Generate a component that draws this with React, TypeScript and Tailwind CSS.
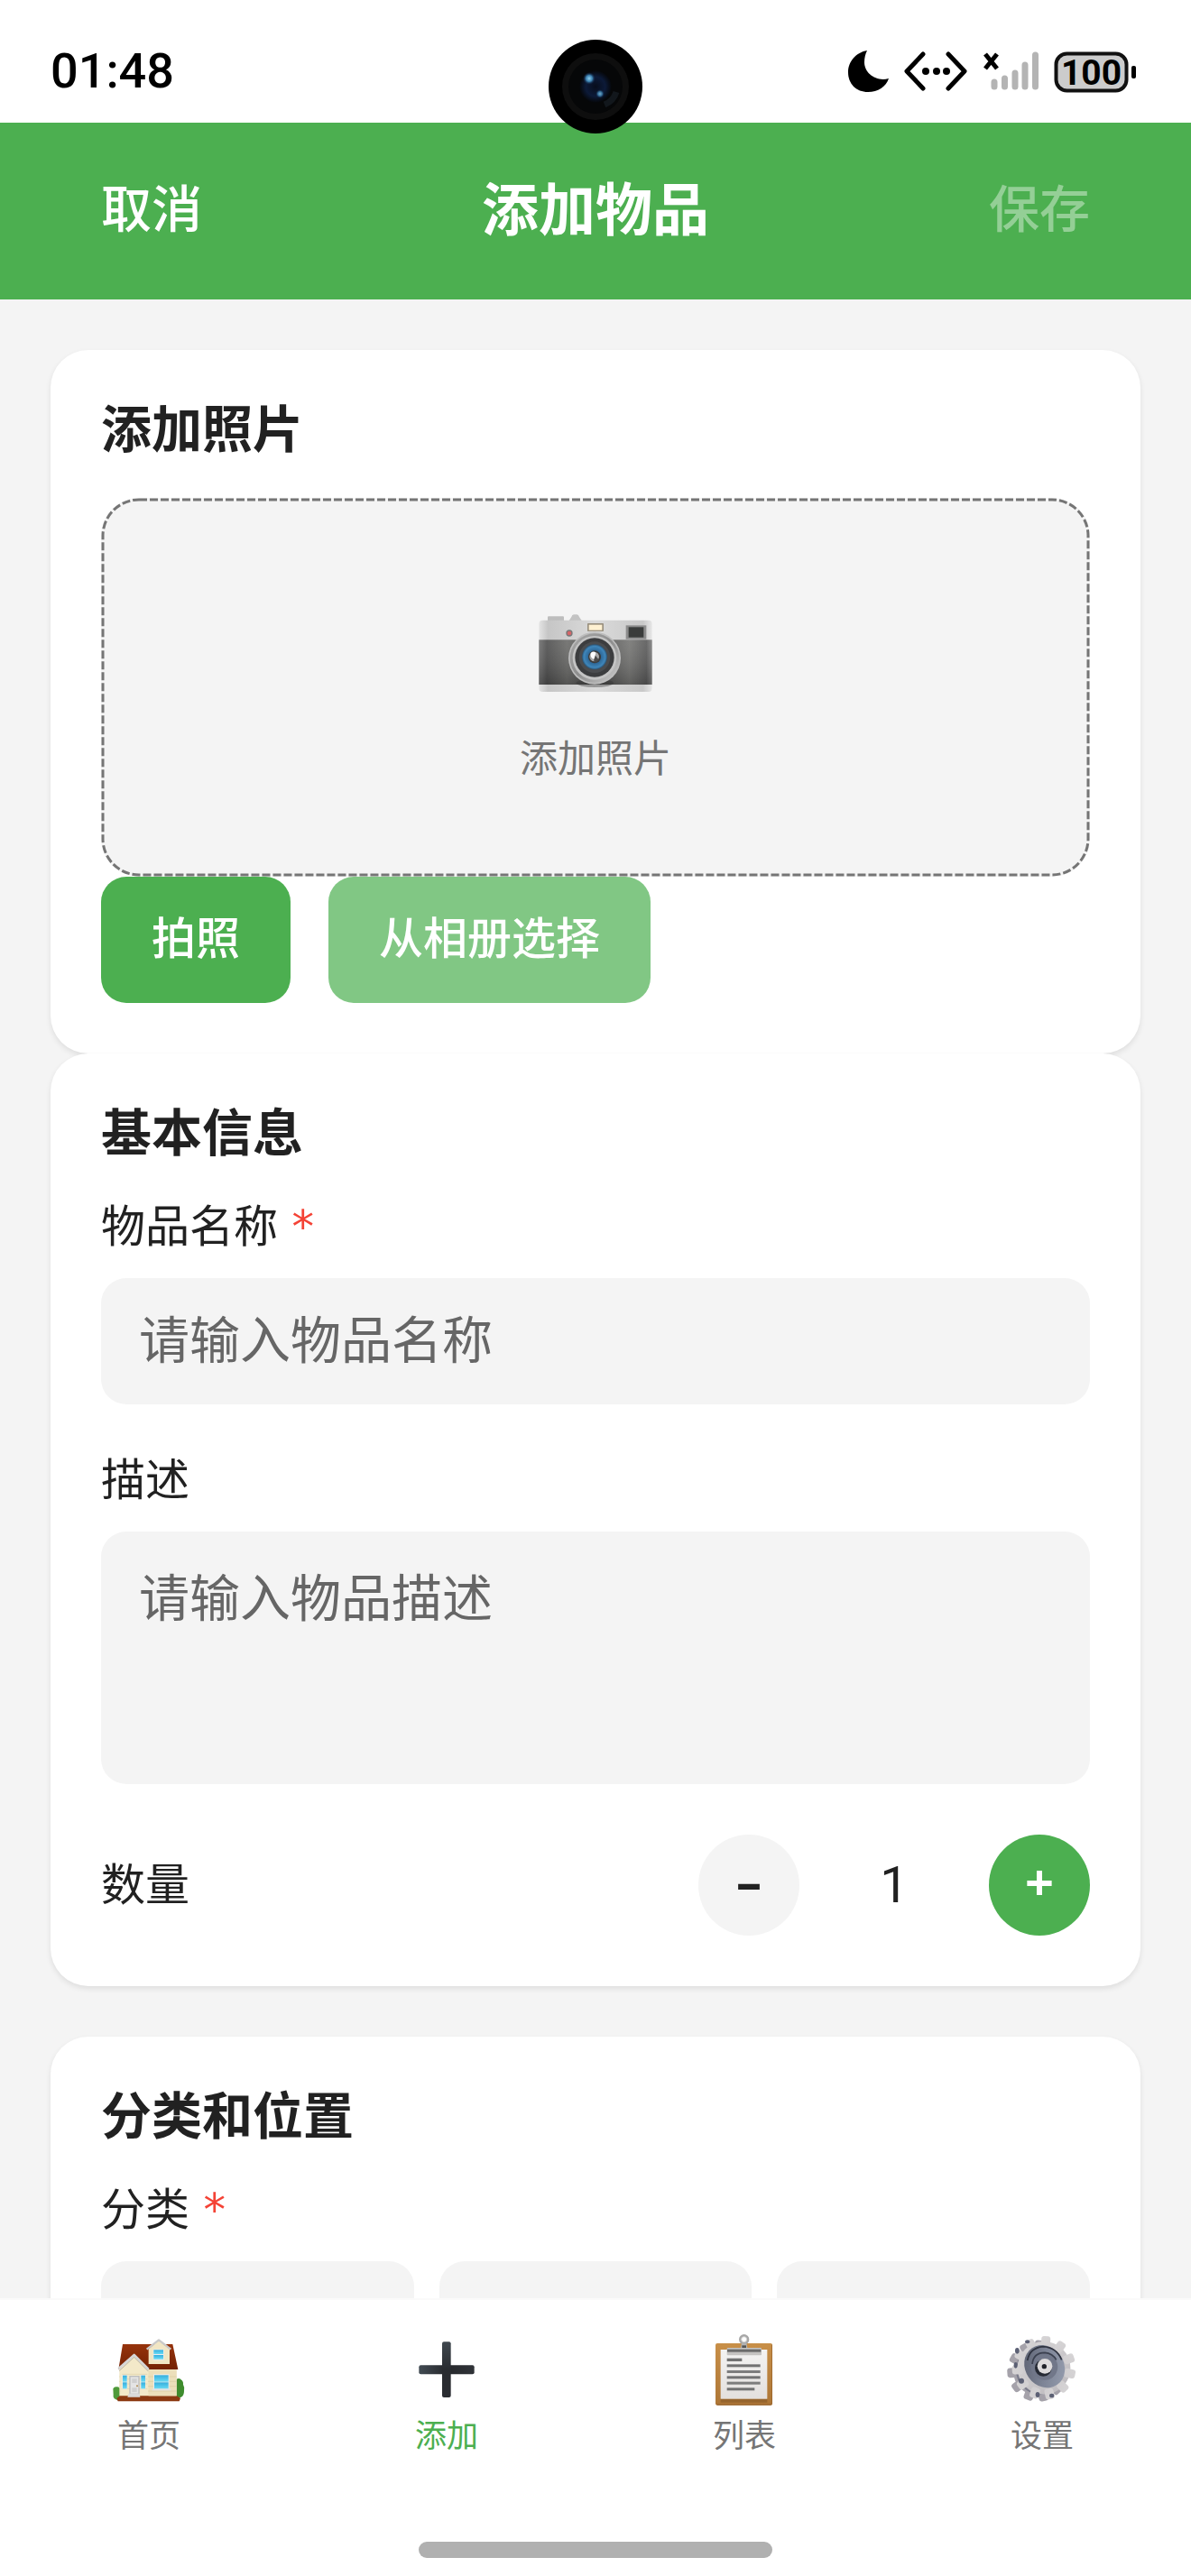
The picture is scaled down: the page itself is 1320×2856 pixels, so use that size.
import React, { useState } from 'react';

const CameraIcon = () => (
  <svg viewBox="102 54 396 396" className="w-[132px] h-[132px]" aria-hidden="true">
    <defs>
      <linearGradient id="camTop" x1="0" y1="0" x2="1" y2="0">
        <stop offset="0" stopColor="#e4e4e4" />
        <stop offset="0.08" stopColor="#c6c6c6" />
        <stop offset="0.5" stopColor="#dadada" />
        <stop offset="0.92" stopColor="#c9c9c9" />
        <stop offset="1" stopColor="#e6e6e6" />
      </linearGradient>
      <linearGradient id="camBody" x1="0" y1="0" x2="1" y2="0">
        <stop offset="0" stopColor="#6f6f6f" />
        <stop offset="0.07" stopColor="#4e4e4e" />
        <stop offset="0.25" stopColor="#6a6a68" />
        <stop offset="0.5" stopColor="#484848" />
        <stop offset="0.8" stopColor="#757573" />
        <stop offset="0.95" stopColor="#595959" />
        <stop offset="1" stopColor="#808080" />
      </linearGradient>
      <linearGradient id="camShade" x1="0" y1="0" x2="0" y2="1">
        <stop offset="0" stopColor="#fff" stopOpacity="0.1" />
        <stop offset="1" stopColor="#000" stopOpacity="0.2" />
      </linearGradient>
      <linearGradient id="camRing" x1="0" y1="0" x2="1" y2="1">
        <stop offset="0" stopColor="#a9a9a9" />
        <stop offset="0.5" stopColor="#8d8d8d" />
        <stop offset="1" stopColor="#cfcfcf" />
      </linearGradient>
      <radialGradient id="camLens">
        <stop offset="0" stopColor="#1d3c57" />
        <stop offset="0.5" stopColor="#2d6797" />
        <stop offset="0.85" stopColor="#3f86ba" />
        <stop offset="1" stopColor="#2b5170" />
      </radialGradient>
    </defs>
    <rect x="141" y="130" width="54" height="16" rx="3" fill="#bdbdbd" />
    <path d="M212 144l8-12q2-8 8-8h10q6 0 8 8l8 12z" fill="#c3c3c3" />
    <rect x="112" y="143" width="376" height="238" rx="12" fill="url(#camTop)" />
    <rect x="112" y="208" width="376" height="149" fill="url(#camBody)" />
    <rect x="112" y="208" width="376" height="149" fill="url(#camShade)" />
    <ellipse cx="298" cy="352" rx="62" ry="14" fill="#333" opacity="0.4" />
    <circle cx="297" cy="269" r="87" fill="#bdbdbd" />
    <circle cx="297" cy="269" r="82" fill="url(#camRing)" />
    <circle cx="297" cy="268" r="73" fill="#c4c4c4" />
    <circle cx="297" cy="267" r="65" fill="#3c3d3f" />
    <circle cx="297" cy="266" r="52" fill="#4a4c4f" />
    <circle cx="297" cy="265" r="42" fill="url(#camLens)" />
    <circle cx="297" cy="265" r="21" fill="#3b3b3b" />
    <circle cx="296" cy="264" r="16" fill="#a8a8a8" />
    <path d="M284 252q9-8 17-1l-6 22q-13-4-11-21z" fill="#fff" />
    <path d="M300 284l12-8-12-16-6 16z" fill="#4a4a4a" />
    <rect x="273" y="153" width="54" height="27" rx="2" fill="#99907f" />
    <rect x="278" y="158" width="44" height="18" fill="#fff1d2" />
    <circle cx="213" cy="186" r="11" fill="#777" />
    <circle cx="213" cy="186" r="7" fill="#d66568" />
    <rect x="401" y="160" width="68" height="46" fill="#8c8c8c" />
    <rect x="410" y="166" width="50" height="34" fill="#3a3c3b" />
  </svg>
);

const HouseIcon = () => (
  <svg viewBox="69 75 252 252" className="w-[84px] h-[84px]" aria-hidden="true">
    <defs>
      <linearGradient id="roof" x1="0" y1="0" x2="0" y2="1">
        <stop offset="0" stopColor="#96330c" />
        <stop offset="1" stopColor="#742203" />
      </linearGradient>
      <linearGradient id="glass" x1="0" y1="0" x2="0" y2="1">
        <stop offset="0" stopColor="#35aedd" />
        <stop offset="1" stopColor="#6cdcf5" />
      </linearGradient>
    </defs>
    <path d="M76 262q4-8 12-6 10-2 12 8v34q-8 4-16-1-9-4-7-14z" fill="#4f9a3a" />
    <path d="M286 232q8-8 16 0 8 5 7 16 6 10 3 22 0 16-10 20-9 6-16 0z" fill="#3f8c2e" />
    <path d="M88 294l12-10h186l14 10-4 10H92z" fill="#8c3a12" />
    <path d="M97 190h190v96H97z" fill="#f1e6c4" />
    <path d="M194 200h93v86h-93z" fill="#ecdfba" />
    <path d="M97 222h190M97 238h190M97 254h190M97 270h190" stroke="#d9cba2" strokeWidth="2" />
    <path d="M108 114h166l18 84H194l-48-46-52 46z" fill="url(#roof)" />
    <path d="M146 152l46 46v84H100v-86z" fill="#f3e9c9" />
    <path d="M106 214h84M104 230h86M104 246h86M104 262h86" stroke="#ddd0a8" strokeWidth="2" />
    <path d="M94 196l52-46 48 48" fill="none" stroke="#d6d6d6" strokeWidth="8" strokeLinejoin="round" />
    <path d="M96 203l50-46 47 47" fill="none" stroke="#a09c90" strokeWidth="2" />
    <path d="M194 130l34-27 36 27v50h-70z" fill="#f1e6c4" />
    <path d="M188 131l40-31 40 31" fill="none" stroke="#c9c9c9" strokeWidth="7" strokeLinejoin="round" />
    <rect x="209" y="131" width="36" height="36" fill="#ececec" />
    <rect x="211" y="133" width="32" height="14" fill="url(#glass)" />
    <rect x="211" y="150" width="32" height="14" fill="url(#glass)" />
    <rect x="210" y="214" width="53" height="50" fill="#ececec" />
    <rect x="213" y="217" width="47" height="22" fill="url(#glass)" />
    <rect x="213" y="241" width="47" height="22" fill="url(#glass)" />
    <rect x="206" y="262" width="62" height="6" fill="#e2e2e2" />
    <rect x="106" y="216" width="17" height="47" fill="#ececec" />
    <rect x="108" y="218" width="14" height="21" fill="url(#glass)" />
    <rect x="108" y="241" width="14" height="21" fill="url(#glass)" />
    <rect x="167" y="216" width="17" height="47" fill="#ececec" />
    <rect x="169" y="218" width="14" height="21" fill="url(#glass)" />
    <rect x="169" y="241" width="14" height="21" fill="url(#glass)" />
    <rect x="130" y="219" width="34" height="62" fill="#bdbdbd" />
    <rect x="134" y="223" width="26" height="55" fill="#e4e4e4" />
    <path d="M139 229h16v14h-16zM139 259h16v14h-16z" fill="#cfcfcf" />
    <circle cx="156" cy="253" r="3" fill="#b08a4c" />
    <path d="M128 278h36l2 12h-42z" fill="#d9d9d9" />
  </svg>
);

const PlusIcon = () => (
  <svg viewBox="99 75 252 252" className="w-[84px] h-[84px]" aria-hidden="true">
    <defs>
      <linearGradient id="plusH" x1="0" y1="0" x2="1" y2="0">
        <stop offset="0" stopColor="#424b53" />
        <stop offset="0.5" stopColor="#26282c" />
        <stop offset="1" stopColor="#303338" />
      </linearGradient>
      <linearGradient id="plusV" x1="0" y1="0" x2="0" y2="1">
        <stop offset="0" stopColor="#3f474e" />
        <stop offset="0.5" stopColor="#292c30" />
        <stop offset="1" stopColor="#2a2c31" />
      </linearGradient>
    </defs>
    <rect x="133" y="184" width="184" height="30" rx="6" fill="url(#plusH)" />
    <rect x="210" y="106" width="29" height="185" rx="6" fill="url(#plusV)" />
  </svg>
);

const ClipboardIcon = () => (
  <svg viewBox="69 75 252 252" className="w-[84px] h-[84px]" aria-hidden="true">
    <defs>
      <linearGradient id="board" x1="0" y1="0" x2="0" y2="1">
        <stop offset="0" stopColor="#c88f48" />
        <stop offset="1" stopColor="#ad7636" />
      </linearGradient>
      <linearGradient id="paper" x1="0" y1="0" x2="0" y2="1">
        <stop offset="0" stopColor="#f4f3f2" />
        <stop offset="1" stopColor="#e3e0de" />
      </linearGradient>
    </defs>
    <rect x="99" y="111" width="189" height="206" rx="6" fill="url(#board)" />
    <path d="M288 117v194q0 6-6 6H105l-4-4h181q3 0 3-4V113z" fill="#8f5c26" opacity="0.6" />
    <rect x="116" y="296" width="155" height="12" fill="#96652e" />
    <rect x="116" y="132" width="155" height="164" fill="url(#paper)" />
    <circle cx="194" cy="98" r="13" fill="none" stroke="#a6a6a6" strokeWidth="8" />
    <circle cx="194" cy="98" r="9" fill="none" stroke="#d0d0d0" strokeWidth="3" />
    <path d="M186 110h16l3 16h-22z" fill="#b3b3b3" />
    <path d="M187 118h14v8h-14z" fill="#555" />
    <rect x="137" y="126" width="115" height="25" rx="3" fill="#c5c3c1" />
    <rect x="138" y="131" width="112" height="9" fill="#6b6b6b" />
    <rect x="137" y="161" width="50" height="10" fill="#727272" />
    <rect x="137" y="181" width="111" height="9" fill="#727272" />
    <rect x="137" y="201" width="111" height="9" fill="#7d7d7d" />
    <rect x="137" y="220" width="111" height="9" fill="#727272" />
    <rect x="137" y="239" width="111" height="9" fill="#7d7d7d" />
    <rect x="137" y="259" width="92" height="9" fill="#727272" />
  </svg>
);

const teeth = [4, 37, 70, 102, 135, 168, 200, 233, 266, 298, 331];

const GearIcon = () => (
  <svg viewBox="99 75 252 252" className="w-[84px] h-[84px]" aria-hidden="true">
    <defs>
      <linearGradient id="gearFace" gradientUnits="userSpaceOnUse" x1="150" y1="100" x2="310" y2="300">
        <stop offset="0" stopColor="#dad8d9" />
        <stop offset="1" stopColor="#bab7bb" />
      </linearGradient>
      <linearGradient id="gearDisc" x1="0" y1="0" x2="1" y2="1">
        <stop offset="0" stopColor="#565b6b" />
        <stop offset="0.5" stopColor="#7d8496" />
        <stop offset="1" stopColor="#9aa2b3" />
      </linearGradient>
    </defs>
    {/* depth of the wheel, seen behind the face */}
    <g fill="#a5a2aa">
      <circle cx="211" cy="203" r="82" />
      {teeth.map((angle) => (
        <rect key={angle} x="195" y="101" width="32" height="38" rx="9" transform={`rotate(${angle} 211 203)`} />
      ))}
    </g>
    <circle cx="220" cy="200" r="82" fill="#7c7d8c" />
    <g fill="url(#gearFace)">
      <circle cx="231" cy="193" r="88" />
      {teeth.map((angle) => (
        <rect key={angle} x="216" y="87" width="30" height="36" rx="9" transform={`rotate(${angle} 231 193)`} />
      ))}
    </g>
    <g fill="#5c6074">
      <ellipse cx="176" cy="106" rx="8" ry="6" />
      <ellipse cx="142" cy="136" rx="7" ry="10" />
      <ellipse cx="137" cy="184" rx="6" ry="10" />
      <ellipse cx="156" cy="236" rx="9" ry="9" />
      <ellipse cx="210" cy="282" rx="7" ry="9" />
      <ellipse cx="257" cy="285" rx="8" ry="7" />
    </g>
    <ellipse cx="233" cy="188" rx="64" ry="74" fill="url(#gearDisc)" transform="rotate(-35 233 188)" />
    <path d="M176 168q8-42 52-46 44 2 62 44" fill="none" stroke="#2f3340" strokeWidth="5" />
    <ellipse cx="232" cy="188" rx="44" ry="46" fill="#717789" transform="rotate(-35 232 188)" />
    <path d="M192 180q4-38 42-38 26 2 38 24" fill="none" stroke="#3b404f" strokeWidth="5" />
    <circle cx="229" cy="193" r="28" fill="#262a34" />
    <circle cx="234" cy="187" r="25" fill="#dddbdc" />
    <circle cx="232" cy="188" r="8" fill="#202229" />
  </svg>
);

const StatusIcons = () => (
  <svg viewBox="936 48 328 62" className="w-[328px] h-[62px]" aria-hidden="true">
    <path d="M961 56c-12 2-21 12-21 24 0 13 9 22 22 22 11 0 20-6 23-15-14 4-27-6-27-18 0-5 1-9 3-13z" fill="#000" />
    <path d="M1023 60l-18 19 18 19M1051 60l18 19-18 19" fill="none" stroke="#000" strokeWidth="5" strokeLinecap="round" strokeLinejoin="round" />
    <circle cx="1026" cy="79" r="4" />
    <circle cx="1038" cy="79" r="4" />
    <circle cx="1049" cy="79" r="4" />
    <path d="M1092 60l13 16M1105 60l-13 16" stroke="#000" strokeWidth="5" />
    <g stroke="#b4b4b4" strokeWidth="7" strokeLinecap="round">
      <path d="M1102 91v5M1113.500 87v9M1125 81v15M1136 72v24M1147.500 61v35" />
    </g>
    <rect x="1170.500" y="59.500" width="78" height="41" rx="12" fill="#ccc" stroke="#111" strokeWidth="4" />
    <rect x="1254" y="73" width="5" height="14" rx="2" />
    <text x="1209.500" y="94" textAnchor="middle" fontSize="39" fontWeight="700" fontFamily="Roboto, sans-serif">100</text>
  </svg>
);

const CameraCutout = () => (
  <svg viewBox="0 0 104 104" className="absolute left-1/2 top-11 w-[104px] h-[104px] -translate-x-1/2 z-10" aria-hidden="true">
    <defs>
      <radialGradient id="cutGlow">
        <stop offset="0" stopColor="#070d1c" />
        <stop offset="0.6" stopColor="#0c1a38" />
        <stop offset="1" stopColor="#050608" />
      </radialGradient>
      <radialGradient id="cutSpot">
        <stop offset="0" stopColor="#8fd0ee" />
        <stop offset="0.5" stopColor="#3b7fae" />
        <stop offset="1" stopColor="#0c1a38" stopOpacity="0" />
      </radialGradient>
    </defs>
    <circle cx="52" cy="52" r="52" fill="#000" />
    <circle cx="52" cy="52" r="37" fill="#0e0e0e" />
    <circle cx="52" cy="52" r="30" fill="#060708" />
    <path d="M62 72q10-4 13-14" stroke="#12171c" strokeWidth="7" fill="none" />
    <circle cx="52" cy="52" r="18" fill="url(#cutGlow)" />
    <circle cx="45" cy="43" r="7" fill="url(#cutSpot)" />
    <circle cx="57" cy="60" r="5" fill="url(#cutSpot)" opacity="0.8" />
  </svg>
);

const Card = ({ title, children }: { title: string; children: React.ReactNode }) => (
  <section className="bg-white rounded-[42px] p-14 shadow-[0_3px_6px_rgba(0,0,0,0.09)]">
    <h2 className="text-[56px] leading-[56px] font-bold mb-[52px]">{title}</h2>
    {children}
  </section>
);

const Required = () => <span className="text-[#F44336] leading-[0] font-['DejaVu_Sans',sans-serif]"> *</span>;

const labelClass = 'block text-[49px] leading-[47px]';
const fieldClass =
  'block w-full bg-[#F4F4F4] rounded-[28px] px-[42px] text-[56px] leading-[56px] placeholder:text-[#666666] outline-none';

const tabs = [
  { label: '首页', Icon: HouseIcon, active: false },
  { label: '添加', Icon: PlusIcon, active: true },
  { label: '列表', Icon: ClipboardIcon, active: false },
  { label: '设置', Icon: GearIcon, active: false },
];

const App: React.FC = () => {
  const [name, setName] = useState('');
  const [description, setDescription] = useState('');
  const [count, setCount] = useState(1);

  return (
    <div className="relative h-screen flex flex-col bg-[#F4F4F4] text-[#212121] font-['Noto_Sans_CJK_SC',sans-serif]">
      {/* Status bar */}
      <div className="shrink-0 h-[136px] bg-white flex items-center justify-between px-14 pt-[22px] text-black">
        <span className="font-[Roboto,sans-serif] text-[54px] leading-[56px] font-medium">01:48</span>
        <StatusIcons />
      </div>
      <CameraCutout />

      <header className="shrink-0 h-[196px] bg-[#4CAF50] text-white flex items-center justify-between px-28 pb-3">
        <button type="button" className="text-[56px] leading-[66px] font-medium">取消</button>
        <h1 className="text-[63px] leading-[66px] font-bold">添加物品</h1>
        <button type="button" disabled={!name} className="text-[56px] leading-[66px] font-medium disabled:opacity-40">保存</button>
      </header>

      <main className="flex-1 min-h-0 overflow-y-auto [scrollbar-width:none] p-14">
        <Card title="添加照片">
          <button
            type="button"
            className="relative w-full h-[420px] bg-[#F4F4F4] rounded-[42px] flex flex-col items-center justify-center"
          >
            <svg className="absolute inset-0 w-full h-full p-[2px] overflow-visible" aria-hidden="true">
              <rect width="100%" height="100%" rx="40" fill="none" stroke="#757575" strokeWidth="3" strokeDasharray="9 3" />
            </svg>
            <CameraIcon />
            <span className="mt-6 mb-1 text-[42px] leading-[48px] text-[#757575]">添加照片</span>
          </button>
          <div className="flex gap-[42px]">
            <button type="button" className="h-[140px] px-14 pb-[10px] rounded-[28px] bg-[#4CAF50] text-white text-[49px] font-medium">
              拍照
            </button>
            <button type="button" className="h-[140px] px-14 pb-[10px] rounded-[28px] bg-[#81C784] text-white text-[49px] font-medium">
              从相册选择
            </button>
          </div>
        </Card>

        <Card title="基本信息">
          <label htmlFor="name" className={labelClass}>物品名称<Required /></label>
          <input
            id="name"
            type="text"
            placeholder="请输入物品名称"
            value={name}
            onChange={(e) => setName(e.target.value)}
            className={`${fieldClass} h-[140px] mt-[38px] pb-3`}
          />

          <label htmlFor="description" className={`${labelClass} mt-14`}>描述</label>
          <textarea
            id="description"
            placeholder="请输入物品描述"
            value={description}
            onChange={(e) => setDescription(e.target.value)}
            className={`${fieldClass} h-[280px] mt-[38px] py-[42px] resize-none`}
          />

          <div className="mt-14 flex items-center justify-between">
            <span className={`${labelClass} pb-[10px]`}>数量</span>
            <div className="flex items-center">
              <button
                type="button"
                aria-label="减少"
                onClick={() => setCount(Math.max(1, count - 1))}
                className="w-28 h-28 rounded-full bg-[#F4F4F4] pb-[10px] font-['Noto_Sans',sans-serif] text-[56px] leading-[56px] font-bold"
              >
                –
              </button>
              <output className="w-[210px] text-center font-[Roboto,sans-serif] text-[56px] leading-[56px]">{count}</output>
              <button
                type="button"
                aria-label="增加"
                onClick={() => setCount(count + 1)}
                className="w-28 h-28 rounded-full bg-[#4CAF50] text-white pb-[10px] font-['Noto_Sans',sans-serif] text-[56px] leading-[56px] font-bold"
              >
                +
              </button>
            </div>
          </div>
        </Card>

        <div className="mt-14">
          <Card title="分类和位置">
            <p className={labelClass}>分类<Required /></p>
            <div className="mt-[38px] grid grid-cols-3 gap-7">
              {[1, 2, 3].map((n) => (
                <button key={n} type="button" aria-label={`分类 ${n}`} className="h-[140px] rounded-[28px] bg-[#F4F4F4]" />
              ))}
            </div>
          </Card>
        </div>
      </main>

      <nav className="shrink-0 bg-white border-t-2 border-[#FAFAFA] pt-9 pb-5">
        <div className="grid grid-cols-4">
          {tabs.map(({ label, Icon, active }) => (
            <a key={label} href="#" className="flex flex-col items-center">
              <Icon />
              <span className={`mt-2 text-[35px] leading-[40px] ${active ? 'text-[#4CAF50]' : 'text-[#757575]'}`}>{label}</span>
            </a>
          ))}
        </div>
        {/* Gesture bar */}
        <div className="mx-auto mt-[100px] w-[392px] h-[18px] rounded-full bg-[#B0B0B0]" />
      </nav>
    </div>
  );
};

export default App;
